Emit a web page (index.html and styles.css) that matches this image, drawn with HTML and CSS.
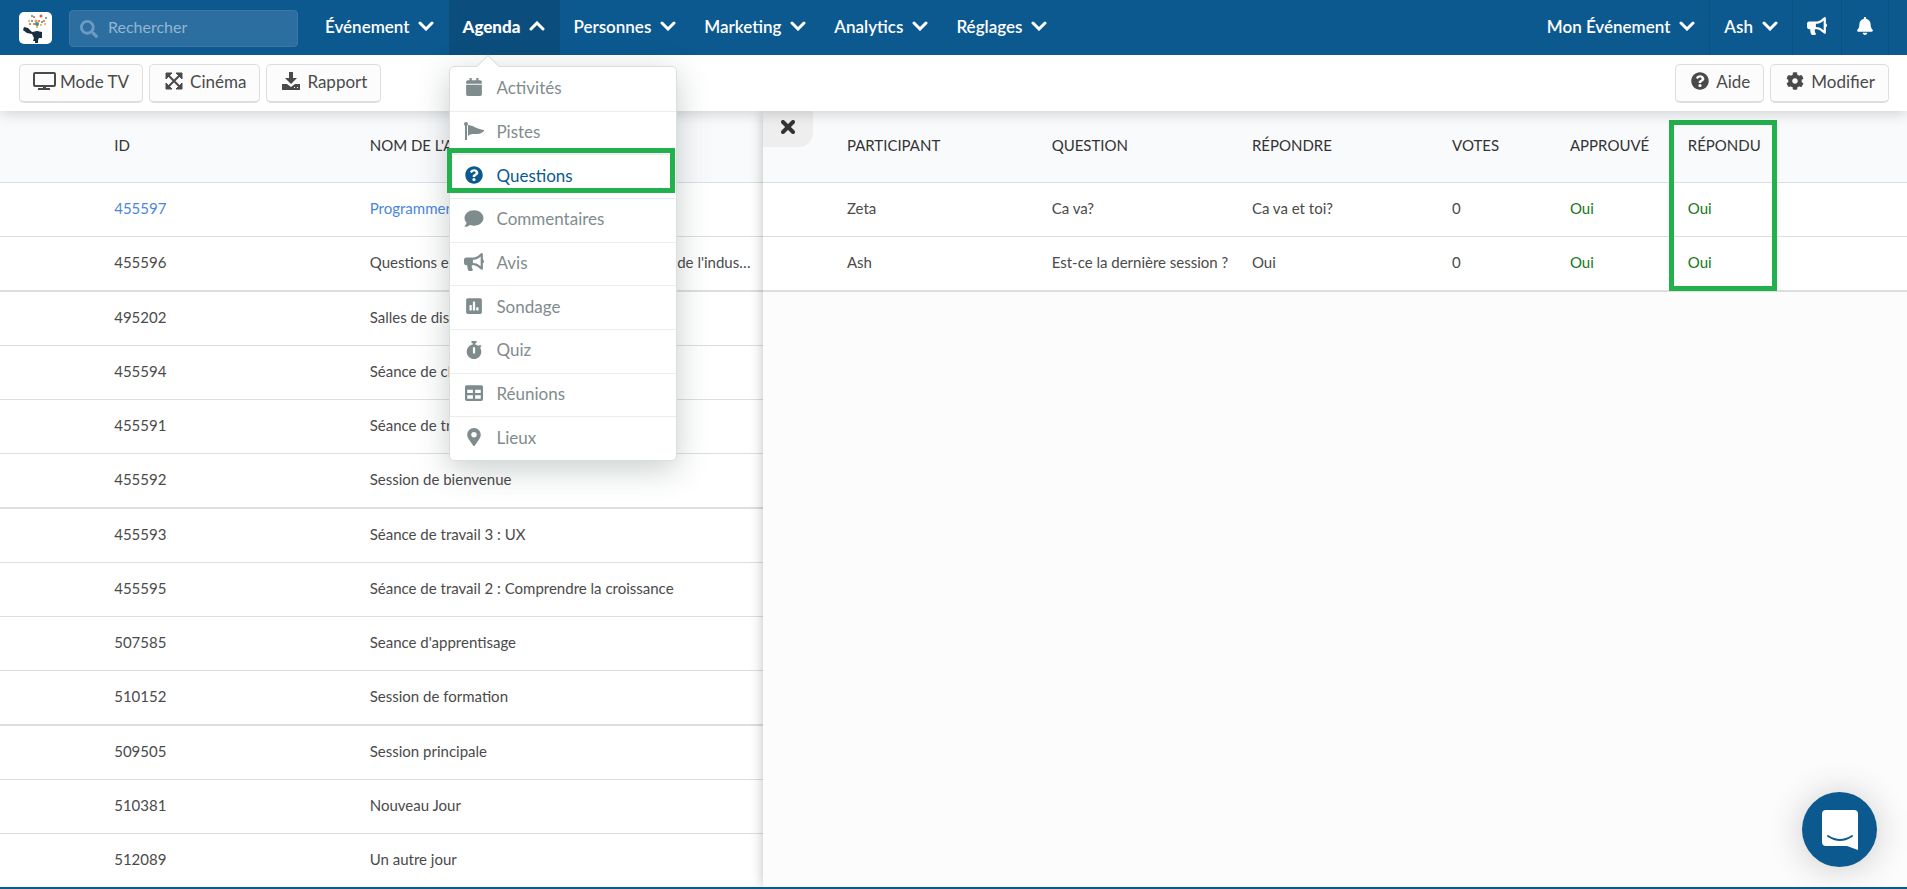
FILE: index.html
```html
<!DOCTYPE html>
<html lang="fr">
<head>
  <meta charset="UTF-8">
  <meta name="viewport" content="width=device-width, initial-scale=1">
  <title>Questions</title>
  <link rel="stylesheet" href="styles.css">
</head>
<body>

  <svg class="sprite" aria-hidden="true">
    <symbol id="down" viewBox="0 0 16 10"><path d="M2 2l6 6 6-6" fill="none" stroke="currentColor" stroke-width="3" stroke-linecap="round"/></symbol>
    <symbol id="up" viewBox="0 0 16 10"><path d="M2 8l6-6 6 6" fill="none" stroke="currentColor" stroke-width="3" stroke-linecap="round"/></symbol>
    <symbol id="help" viewBox="0 0 512 512"><path d="M504 256c0 136.997-111.043 248-248 248S8 392.997 8 256C8 119.083 119.043 8 256 8s248 111.083 248 248zM262.655 90c-54.497 0-89.255 22.957-116.549 63.758-3.536 5.286-2.353 12.415 2.715 16.258l34.699 26.31c5.205 3.947 12.621 3.008 16.665-2.122 17.864-22.658 30.113-35.797 57.303-35.797 20.429 0 45.698 13.148 45.698 32.958 0 14.976-12.363 22.667-32.534 33.976C247.128 238.528 216 254.941 216 296v4c0 6.627 5.373 12 12 12h56c6.627 0 12-5.373 12-12v-1.333c0-28.462 83.186-29.647 83.186-106.667 0-58.002-60.165-102-116.531-102zM256 338c-25.365 0-46 20.635-46 46 0 25.364 20.635 46 46 46s46-20.636 46-46c0-25.365-20.635-46-46-46z"/></symbol>
    <symbol id="bullhorn" viewBox="0 0 576 512"><path d="M576 240c0-23.63-12.95-44.04-32-55.12V32.01C544 23.26 537.02 0 512 0c-7.12 0-14.19 2.38-19.98 7.02l-85.03 68.03C364.28 109.19 310.66 128 256 128H64c-35.35 0-64 28.65-64 64v96c0 35.35 28.65 64 64 64h33.7c-1.39 10.48-2.18 21.14-2.18 32 0 39.77 9.26 77.35 25.56 110.94 5.19 10.69 16.52 17.06 28.4 17.06h74.28c26.05 0 41.69-29.84 25.9-50.56-16.4-21.52-26.15-48.36-26.15-77.44 0-11.11 1.62-21.79 4.41-32H256c54.66 0 108.28 18.81 150.98 52.95l85.03 68.03a32.023 32.023 0 0 0 19.98 7.02c24.92 0 32-22.78 32-32V295.13C563.05 284.04 576 263.63 576 240zm-96 141.42l-33.05-26.44C392.95 311.78 325.12 288 256 288v-96c69.12 0 136.95-23.78 190.95-66.98L480 98.58v282.84z"/></symbol>
  </svg>

  <header class="navbar">
    <a class="logo" href="#" aria-label="Accueil">
      <svg viewBox="0 0 33 32" width="33" height="32">
        <path d="M5 15l4 1 4 4 5-1 5 1v6h-3l-1 2v3h-3v-2h-2l1-3-2-4-5-1-4-3z" fill="#16303f"/>
        <g fill="#e2553d"><circle cx="15" cy="5" r="1"/><circle cx="22" cy="4" r="1.5"/><circle cx="25" cy="9" r="1"/><circle cx="11" cy="12" r="1"/><circle cx="20" cy="9" r="1"/><circle cx="15" cy="12" r="1"/></g>
        <g fill="#e9a13b"><circle cx="10" cy="9" r="1"/><circle cx="17" cy="9" r="1.5"/><circle cx="26" cy="12" r="1"/><circle cx="22" cy="13" r="1"/><circle cx="18" cy="15" r="1"/></g>
        <g fill="#3f8f86"><circle cx="13" cy="4" r="1"/><circle cx="18" cy="12" r="2"/><circle cx="23" cy="10" r="1"/><circle cx="13" cy="9" r="1"/><circle cx="27" cy="6" r="1"/></g>
      </svg>
    </a>
    <label class="search">
      <svg viewBox="0 0 512 512" width="18" height="18"><path d="M505 442.7L405.3 343c-4.5-4.5-10.6-7-17-7H372c27.6-35.3 44-79.7 44-128C416 93.1 322.9 0 208 0S0 93.1 0 208s93.1 208 208 208c48.3 0 92.7-16.4 128-44v16.3c0 6.4 2.5 12.5 7 17l99.7 99.7c9.4 9.4 24.6 9.4 33.9 0l28.3-28.3c9.4-9.4 9.4-24.6.1-34zM208 336c-70.7 0-128-57.2-128-128 0-70.7 57.2-128 128-128 70.7 0 128 57.2 128 128 0 70.7-57.2 128-128 128z"/></svg>
      <input type="search" placeholder="Rechercher" aria-label="Rechercher">
    </label>
    <nav class="nav">
      <button class="nav-item">Événement <svg class="chevron"><use href="#down"/></svg></button>
      <div class="dropdown">
        <button class="nav-item active" aria-expanded="true">Agenda <svg class="chevron"><use href="#up"/></svg></button>
        <div class="menu">
          <a href="#"><svg viewBox="0 0 448 512" width="20" height="18"><path d="M12 192h424c6.6 0 12 5.4 12 12v260c0 26.5-21.5 48-48 48H48c-26.5 0-48-21.5-48-48V204c0-6.6 5.4-12 12-12zm436-44v-36c0-26.5-21.5-48-48-48h-48V12c0-6.6-5.4-12-12-12h-40c-6.6 0-12 5.4-12 12v52H160V12c0-6.6-5.4-12-12-12h-40c-6.6 0-12 5.4-12 12v52H48C21.5 64 0 85.5 0 112v36c0 6.6 5.4 12 12 12h424c6.6 0 12-5.4 12-12z"/></svg>Activités</a>
          <a href="#"><svg viewBox="0 0 20 18" width="20" height="18"><circle cx="2" cy="2" r="2"/><path d="M1 3h2v15H1zM4 3c5 0 8 4 16 5v1c-3 3-6 3-9 3-3 0-5 0-7 2z"/></svg>Pistes</a>
          <a href="#" class="selected"><svg width="20" height="18"><use href="#help"/></svg>Questions</a>
          <a href="#"><svg viewBox="0 0 512 512" width="20" height="19"><path d="M256 32C114.6 32 0 125.1 0 240c0 49.6 21.4 95 57 130.7C44.5 421.1 2.7 466 2.2 466.5c-2.2 2.3-2.8 5.7-1.5 8.7S4.8 480 8 480c66.3 0 116-31.8 140.6-51.4 32.7 12.3 69 19.4 107.4 19.4 141.4 0 256-93.1 256-208S397.4 32 256 32z"/></svg>Commentaires</a>
          <a href="#"><svg width="20" height="18"><use href="#bullhorn"/></svg>Avis</a>
          <a href="#"><svg viewBox="0 0 448 512" width="20" height="18"><path d="M400 32H48C21.5 32 0 53.5 0 80v352c0 26.5 21.5 48 48 48h352c26.5 0 48-21.5 48-48V80c0-26.5-21.5-48-48-48zM160 368c0 8.84-7.16 16-16 16h-32c-8.84 0-16-7.16-16-16V240c0-8.84 7.16-16 16-16h32c8.84 0 16 7.16 16 16v128zm96 0c0 8.84-7.16 16-16 16h-32c-8.84 0-16-7.16-16-16V144c0-8.84 7.16-16 16-16h32c8.84 0 16 7.16 16 16v224zm96 0c0 8.84-7.16 16-16 16h-32c-8.84 0-16-7.16-16-16v-64c0-8.84 7.16-16 16-16h32c8.84 0 16 7.16 16 16v64z"/></svg>Sondage</a>
          <a href="#"><svg viewBox="0 0 448 512" width="20" height="18"><path d="M432 304c0 114.9-93.1 208-208 208S16 418.9 16 304c0-104 76.3-190.2 176-205.5V64h-28c-6.6 0-12-5.4-12-12V12c0-6.6 5.4-12 12-12h120c6.6 0 12 5.4 12 12v40c0 6.6-5.4 12-12 12h-28v34.5c37.5 5.8 71.7 21.6 99.7 44.6l27.5-27.5c4.7-4.7 12.3-4.7 17 0l28.3 28.3c4.7 4.7 4.7 12.3 0 17l-29.4 29.4-.6.6C419.7 223.3 432 262.2 432 304zm-176 36V188.5c0-6.6-5.4-12-12-12h-40c-6.6 0-12 5.4-12 12V340c0 6.6 5.4 12 12 12h40c6.6 0 12-5.4 12-12z"/></svg>Quiz</a>
          <a href="#"><svg viewBox="0 0 512 512" width="20" height="18"><path d="M464 32H48C21.49 32 0 53.49 0 80v352c0 26.51 21.49 48 48 48h416c26.51 0 48-21.49 48-48V80c0-26.51-21.49-48-48-48zM224 416H64v-96h160v96zm0-160H64v-96h160v96zm224 160H288v-96h160v96zm0-160H288v-96h160v96z"/></svg>Réunions</a>
          <a href="#"><svg viewBox="0 0 384 512" width="20" height="18"><path d="M172.268 501.67C26.97 291.031 0 269.413 0 192 0 85.961 85.961 0 192 0s192 85.961 192 192c0 77.413-26.97 99.031-172.268 309.67-9.535 13.774-29.93 13.773-39.464 0zM192 272c44.183 0 80-35.817 80-80s-35.817-80-80-80-80 35.817-80 80 35.817 80 80 80z"/></svg>Lieux</a>
        </div>
      </div>
      <button class="nav-item">Personnes <svg class="chevron"><use href="#down"/></svg></button>
      <button class="nav-item">Marketing <svg class="chevron"><use href="#down"/></svg></button>
      <button class="nav-item">Analytics <svg class="chevron"><use href="#down"/></svg></button>
      <button class="nav-item">Réglages <svg class="chevron"><use href="#down"/></svg></button>
    </nav>
    <div class="nav nav-right">
      <button class="nav-item">Mon Événement <svg class="chevron"><use href="#down"/></svg></button>
      <button class="nav-item">Ash <svg class="chevron"><use href="#down"/></svg></button>
      <button class="nav-item" aria-label="Annonces"><svg width="20" height="18"><use href="#bullhorn"/></svg></button>
      <button class="nav-item" aria-label="Notifications"><svg viewBox="0 0 448 512" width="18" height="18"><path d="M224 512c35.32 0 63.97-28.65 63.97-64H160.03c0 35.35 28.65 64 63.97 64zm215.39-149.71c-19.32-20.76-55.47-51.99-55.47-154.29 0-77.7-54.48-139.9-127.94-155.16V32c0-17.67-14.32-32-31.98-32s-31.98 14.33-31.98 32v20.84C118.56 68.1 64.08 130.3 64.08 208c0 102.3-36.15 133.53-55.47 154.29-6 6.45-8.66 14.16-8.61 21.71.11 16.4 12.98 32 32.1 32h383.8c19.12 0 32-15.6 32.1-32 .05-7.55-2.61-15.27-8.61-21.71z"/></svg></button>
    </div>
  </header>

  <div class="toolbar">
    <button class="btn tv"><svg viewBox="0 0 23 18" width="23" height="18"><rect x="1" y="1" width="21" height="13" rx="1" fill="none" stroke="currentColor" stroke-width="2"/><path d="M10 14h3v2h4v2H5v-2h5z"/></svg>Mode TV</button>
    <button class="btn"><svg viewBox="0 0 18 18" width="18" height="18"><path d="M1 1h6L1 7zM17 1v6l-6-6zM1 17v-6l6 6zM17 17h-6l6-6z" stroke="currentColor" stroke-linejoin="round"/><path d="M3 3l12 12M15 3L3 15" stroke="currentColor" stroke-width="2"/></svg>Cinéma</button>
    <button class="btn"><svg viewBox="0 0 18 18" width="18" height="18"><path d="M7 0h4v6h4l-6 6-6-6h4z"/><path d="M0 12h5l4 3 4-3h5v6H0z"/><path d="M12 15h1v1h-1zM15 15h1v1h-1z" fill="#fff"/></svg>Rapport</button>
    <span class="spacer"></span>
    <button class="btn"><svg width="18" height="18"><use href="#help"/></svg>Aide</button>
    <button class="btn"><svg viewBox="0 0 512 512" width="18" height="18"><path d="M487.4 315.7l-42.6-24.6c4.3-23.2 4.3-47 0-70.2l42.6-24.6c4.9-2.8 7.1-8.6 5.5-14-11.1-35.6-30-67.8-54.7-94.6-3.8-4.1-10-5.1-14.8-2.3L380.8 110c-17.9-15.4-38.5-27.3-60.8-35.1V25.8c0-5.6-3.9-10.5-9.4-11.7-36.7-8.2-74.3-7.8-109.2 0-5.5 1.2-9.4 6.1-9.4 11.7V75c-22.2 7.9-42.8 19.8-60.8 35.1L88.7 85.5c-4.9-2.8-11-1.9-14.8 2.3-24.7 26.7-43.6 58.9-54.7 94.6-1.7 5.4.6 11.2 5.5 14L67.3 221c-4.3 23.2-4.3 47 0 70.2l-42.6 24.6c-4.9 2.8-7.1 8.6-5.5 14 11.1 35.6 30 67.8 54.7 94.6 3.8 4.1 10 5.1 14.8 2.3l42.6-24.6c17.9 15.4 38.5 27.3 60.8 35.1v49.2c0 5.6 3.9 10.5 9.4 11.7 36.7 8.2 74.3 7.8 109.2 0 5.5-1.2 9.4-6.1 9.4-11.7v-49.2c22.2-7.9 42.8-19.8 60.8-35.1l42.6 24.6c4.9 2.8 11 1.9 14.8-2.3 24.7-26.7 43.6-58.9 54.7-94.6 1.5-5.5-.7-11.3-5.6-14.1zM256 336c-44.1 0-80-35.9-80-80s35.9-80 80-80 80 35.9 80 80-35.9 80-80 80z"/></svg>Modifier</button>
  </div>

  <main class="panes">
    <section class="pane">
      <table class="grid activities">
        <colgroup><col class="c-gutter"><col class="c-id"><col></colgroup>
        <thead>
          <tr><th></th><th>ID</th><th>NOM DE L'ACTIVITÉ</th></tr>
        </thead>
        <tbody>
          <tr><td></td><td><a href="#">455597</a></td><td><a href="#">Programmer</a></td></tr>
          <tr><td></td><td>455596</td><td>Questions et réponses avec tous les dirigeants de l'industrie</td></tr>
          <tr><td></td><td>495202</td><td>Salles de discussion</td></tr>
          <tr><td></td><td>455594</td><td>Séance de clôture</td></tr>
          <tr><td></td><td>455591</td><td>Séance de travail</td></tr>
          <tr><td></td><td>455592</td><td>Session de bienvenue</td></tr>
          <tr><td></td><td>455593</td><td>Séance de travail 3 : UX</td></tr>
          <tr><td></td><td>455595</td><td>Séance de travail 2 : Comprendre la croissance</td></tr>
          <tr><td></td><td>507585</td><td>Seance d'apprentisage</td></tr>
          <tr><td></td><td>510152</td><td>Session de formation</td></tr>
          <tr><td></td><td>509505</td><td>Session principale</td></tr>
          <tr><td></td><td>510381</td><td>Nouveau Jour</td></tr>
          <tr><td></td><td>512089</td><td>Un autre jour</td></tr>
        </tbody>
      </table>
    </section>

    <section class="pane detail">
      <button class="close" aria-label="Fermer"><svg viewBox="0 0 14 14" width="14" height="14"><path d="M2 2l10 10M12 2L2 12" stroke="currentColor" stroke-width="4" stroke-linecap="round"/></svg></button>
      <table class="grid questions">
        <colgroup><col class="c-start"><col class="c-person"><col class="c-wide"><col class="c-wide"><col class="c-narrow"><col class="c-narrow"><col></colgroup>
        <thead>
          <tr><th></th><th>PARTICIPANT</th><th>QUESTION</th><th>RÉPONDRE</th><th>VOTES</th><th>APPROUVÉ</th><th class="marked">RÉPONDU</th></tr>
        </thead>
        <tbody>
          <tr><td></td><td>Zeta</td><td>Ca va?</td><td>Ca va et toi?</td><td>0</td><td class="yes">Oui</td><td class="yes">Oui</td></tr>
          <tr><td></td><td>Ash</td><td>Est-ce la dernière session ?</td><td>Oui</td><td>0</td><td class="yes">Oui</td><td class="yes">Oui</td></tr>
        </tbody>
      </table>
    </section>
  </main>

  <button class="chat" aria-label="Ouvrir la messagerie">
    <svg viewBox="0 0 36 40" width="36" height="40"><path d="M4 0h28a4 4 0 0 1 4 4v36l-11-4H4a4 4 0 0 1-4-4V4a4 4 0 0 1 4-4z" fill="#fff"/><path d="M6 26q12 8 24 0" fill="none" stroke="#0c5990" stroke-width="2" stroke-linecap="round"/></svg>
  </button>

</body>
</html>
```

FILE: styles.css
```css
*,
*::before,
*::after {
  box-sizing: border-box;
}
body {
  margin: 0;
  height: 100vh;
  display: flex;
  flex-direction: column;
  overflow: hidden;
  border-bottom: 2px solid #0c5990;
  background: #fff;
  color: #4a4a4a;
  font-family: Lato, "Open Sans", sans-serif;
  font-size: 15px;
}
button,
input {
  font: inherit;
  color: inherit;
}
a {
  color: #4a86dc;
  text-decoration: none;
}
svg {
  fill: currentColor;
  flex: none;
}
.sprite {
  position: absolute;
  width: 0;
  height: 0;
}

/* navbar */
.navbar {
  display: flex;
  align-items: center;
  height: 55px;
  padding: 0 18px 0 19px;
  background: #0c5990;
  color: #fff;
  font-size: 17px;
  position: relative;
  z-index: 3;
}
.logo {
  display: flex;
  background: #fff;
  border-radius: 5px;
}
.search {
  display: flex;
  align-items: center;
  gap: 10px;
  width: 229px;
  height: 37px;
  margin: 2px 14px 0 17px;
  padding: 0 10px;
  border: 1px solid #3b78a6;
  border-radius: 4px;
  background: #2d6ea0;
  color: #6d9bc0;
  font-size: 16px;
}
.search input {
  flex: 1;
  min-width: 0;
  padding: 0 0 4px;
  border: 0;
  outline: 0;
  background: none;
}
.search input::placeholder {
  color: #92b6d1;
}
.nav {
  display: flex;
  height: 55px;
}
.nav-right {
  margin-left: auto;
}
.nav-item {
  display: flex;
  align-items: center;
  gap: 9px;
  height: 55px;
  padding: 0 15px 3px 13px;
  border: 0;
  background: none;
  font-weight: 600;
}
.nav-item.active {
  background: #0b4d7d;
  font-weight: 900;
}
.nav-right .nav-item {
  padding: 0 14px 3px;
  border-right: 1px solid #0b5083;
}
.chevron {
  width: 16px;
  height: 10px;
}

/* dropdown */
.dropdown {
  position: relative;
}
.menu {
  position: absolute;
  top: 66px;
  left: 0;
  display: grid;
  grid-auto-rows: 1fr;
  width: 228px;
  height: 395px;
  border: 1px solid #dcdede;
  border-radius: 5px;
  background: #fff;
  box-shadow: 0 8px 32px rgba(40, 60, 60, 0.25);
}
.menu::before {
  content: "";
  position: absolute;
  top: -9px;
  left: 30px;
  width: 16px;
  height: 16px;
  border: solid #dcdede;
  border-width: 1px 0 0 1px;
  background: #fff;
  transform: rotate(45deg);
}
.menu a {
  position: relative;
  display: flex;
  align-items: center;
  gap: 12px;
  padding: 0 14px 3px;
  color: #7f8c8d;
}
.menu a + a {
  border-top: 1px solid #eceeee;
}
.menu a.selected {
  color: #0c5990;
}
.menu a.selected::after {
  content: "";
  position: absolute;
  inset: -7px 1px 5px -3px;
  border: 5px solid #22b14c;
}

/* toolbar */
.toolbar {
  display: flex;
  align-items: center;
  gap: 6px;
  height: 56px;
  padding: 0 18px 0 19px;
  background: #fff;
  box-shadow: 0 2px 14px rgba(0, 0, 0, 0.18);
  position: relative;
  z-index: 2;
}
.spacer {
  flex: 1;
}
.btn {
  display: flex;
  align-items: center;
  gap: 7px;
  height: 39px;
  padding: 0 13px 3px 15px;
  border: 1px solid #dededf;
  border-bottom-width: 2px;
  border-radius: 5px;
  background: #fcfcfc;
  font-size: 17px;
}
.btn.tv {
  gap: 4px;
  padding-left: 13px;
}

/* tables */
.panes {
  display: grid;
  grid-template-columns: 40% 60%;
  flex: 1;
  min-height: 0;
}
.pane {
  overflow: hidden;
}
.detail {
  position: relative;
  background: #fcfcfc;
  box-shadow: 0 0 12px rgba(0, 0, 0, 0.25);
}
.close {
  position: absolute;
  top: 0;
  left: 0;
  display: flex;
  align-items: center;
  justify-content: center;
  width: 50px;
  height: 36px;
  padding: 0 0 5px;
  border: 0;
  border-radius: 0 0 14px 0;
  background: #eee;
  color: #333;
}
.grid {
  width: 100%;
  table-layout: fixed;
  border-collapse: separate;
  border-spacing: 0;
}
.grid th,
.grid td {
  height: 54px;
  padding: 0 12px 4px;
  border-bottom: 1px solid #dcdfdf;
  background: #fff;
  text-align: left;
  font-weight: 400;
  white-space: nowrap;
  overflow: hidden;
  text-overflow: ellipsis;
}
.grid th {
  height: 72px;
  background: #f9fafc;
  color: #333;
}
.grid tr:nth-child(4n + 2) td {
  height: 55px;
  border-bottom-width: 2px;
}
.questions td {
  padding-right: 4px;
}
.c-gutter { width: 13.4%; }
.c-id { width: 33.5%; }
.c-start { width: 6.3%; }
.c-person { width: 17.9%; }
.c-wide { width: 17.5%; }
.c-narrow { width: 10.3%; }
.yes {
  color: #15781b;
}
.questions th.marked {
  position: relative;
  overflow: visible;
}
.marked::after {
  content: "";
  position: absolute;
  top: 9px;
  left: -7px;
  width: 108px;
  height: 171px;
  border: 5px solid #22b14c;
}

/* chat launcher */
.chat {
  position: fixed;
  right: 30px;
  bottom: 22px;
  display: flex;
  align-items: center;
  justify-content: center;
  width: 75px;
  height: 75px;
  padding: 0;
  border: 0;
  border-radius: 50%;
  background: #0c5990;
  box-shadow: 0 2px 36px rgba(0, 0, 0, 0.2);
}
```
